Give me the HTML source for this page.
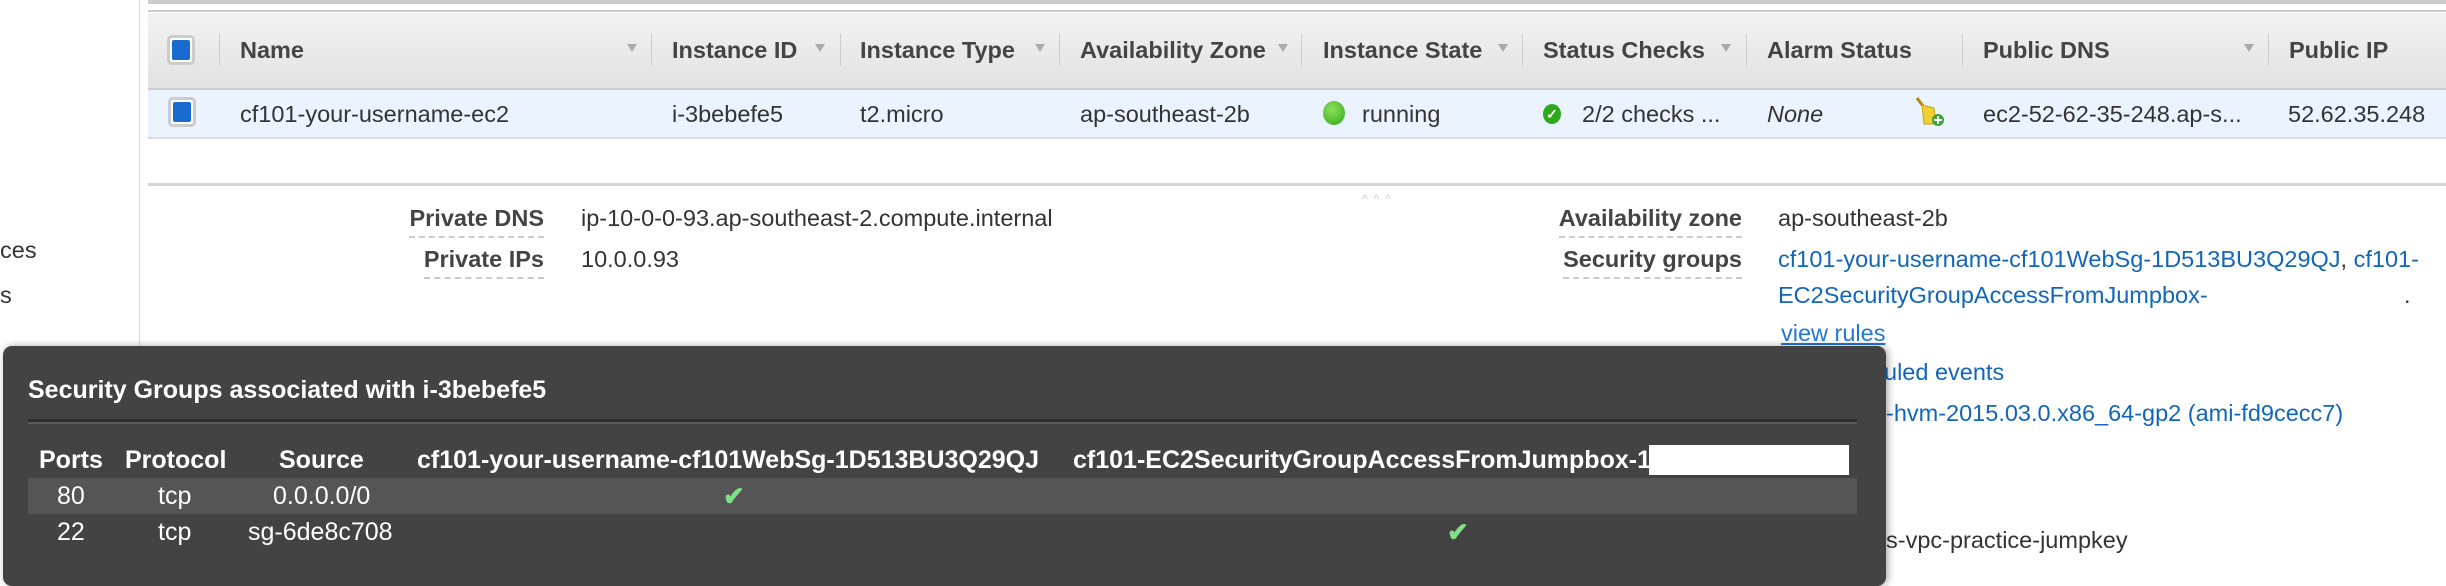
<!DOCTYPE html>
<html><head><meta charset="utf-8"><style>
body{margin:0;width:2446px;height:574px;overflow:hidden;background:#fff;font-family:"Liberation Sans",Arial,sans-serif;position:relative;color:#333}
.a{position:absolute;white-space:nowrap;line-height:26px;font-size:23.5px}
.h{font-weight:bold;color:#444}
.sep{position:absolute;top:34px;width:1px;height:32px;background:#ccc}
.arr{position:absolute;top:44px;width:0;height:0;border-left:5px solid transparent;border-right:5px solid transparent;border-top:8px solid #aaa}
.cb{position:absolute;width:22px;height:24px;border:3px solid #ccc;border-radius:5px;background:#fff}
.cb i{position:absolute;left:2px;top:2px;right:2px;bottom:2px;background:#1a6bd0;border-radius:2px}
.lnk{color:#1166bb}
.lbl{font-weight:bold;color:#444;border-bottom:2px dashed #ccc;padding-bottom:5px}
.w{color:#fff;font-weight:bold;font-size:25px}
.wn{color:#fff;font-size:25px}
.ck{color:#7fe08a;font-size:26px;font-weight:bold}
</style></head><body>
<div style="position:absolute;left:139px;top:0;width:1px;height:574px;background:#ddd"></div>
<div style="position:absolute;left:148px;top:0;width:2300px;height:4px;background:#ccc"></div>
<div style="position:absolute;left:148px;top:10px;width:2300px;height:2px;background:#ccc"></div>
<div style="position:absolute;left:148px;top:13px;width:2300px;height:75px;background:linear-gradient(#f2f2f2,#e2e2e2)"></div>
<div style="position:absolute;left:148px;top:88px;width:2300px;height:2px;background:#ccc"></div>
<div style="position:absolute;left:148px;top:90px;width:2300px;height:48px;background:#eaf3fe"></div>
<div style="position:absolute;left:148px;top:137px;width:2300px;height:2px;background:#ddd"></div>
<div style="position:absolute;left:148px;top:183px;width:2300px;height:3px;background:#d4d4d4"></div>

<div class="cb" style="left:167px;top:35px"><i></i></div>
<div class="sep" style="left:219px"></div>
<div class="a h" style="left:240px;top:37px">Name</div><div class="arr" style="left:627px"></div>
<div class="sep" style="left:651px"></div>
<div class="a h" style="left:672px;top:37px">Instance ID</div><div class="arr" style="left:815px"></div>
<div class="sep" style="left:840px"></div>
<div class="a h" style="left:860px;top:37px">Instance Type</div><div class="arr" style="left:1035px"></div>
<div class="sep" style="left:1059px"></div>
<div class="a h" style="left:1080px;top:37px">Availability Zone</div><div class="arr" style="left:1278px"></div>
<div class="sep" style="left:1301px"></div>
<div class="a h" style="left:1323px;top:37px">Instance State</div><div class="arr" style="left:1498px"></div>
<div class="sep" style="left:1522px"></div>
<div class="a h" style="left:1543px;top:37px">Status Checks</div><div class="arr" style="left:1721px"></div>
<div class="sep" style="left:1746px"></div>
<div class="a h" style="left:1767px;top:37px">Alarm Status</div>
<div class="sep" style="left:1962px"></div>
<div class="a h" style="left:1983px;top:37px">Public DNS</div><div class="arr" style="left:2244px"></div>
<div class="sep" style="left:2268px"></div>
<div class="a h" style="left:2289px;top:37px">Public IP</div>

<div class="cb" style="left:168px;top:97px"><i></i></div>
<div class="a" style="left:240px;top:101px">cf101-your-username-ec2</div>
<div class="a" style="left:672px;top:101px">i-3bebefe5</div>
<div class="a" style="left:860px;top:101px">t2.micro</div>
<div class="a" style="left:1080px;top:101px">ap-southeast-2b</div>
<div style="position:absolute;left:1323px;top:101px;width:22px;height:24px;border-radius:50%;background:radial-gradient(circle at 40% 35%,#8de05a,#2ea81c)"></div>
<div class="a" style="left:1362px;top:101px">running</div>
<div style="position:absolute;left:1543px;top:104px;width:18px;height:20px;border-radius:50%;background:#2ea81c;color:#fff;font-size:14px;line-height:20px;text-align:center;font-weight:bold">✓</div>
<div class="a" style="left:1582px;top:101px">2/2 checks ...</div>
<div class="a" style="left:1767px;top:101px;font-style:italic">None</div>
<svg style="position:absolute;left:1914px;top:96px" width="32" height="32"><path d="M3 2 L9 10" stroke="#b8860b" stroke-width="3"/><path d="M8 9 L20 12 L22 28 L10 28 Z" fill="#f0d030" stroke="#c9a010"/><circle cx="24" cy="24" r="6" fill="#3aa53a"/><path d="M24 20v8M20 24h8" stroke="#fff" stroke-width="2"/></svg>
<div class="a" style="left:1983px;top:101px">ec2-52-62-35-248.ap-s...</div>
<div class="a" style="left:2288px;top:101px">52.62.35.248</div>

<div class="a" style="left:1362px;top:186px;font-size:12px;color:#ccc;letter-spacing:6px">^^^</div>
<div class="a lbl" style="right:1902px;top:205px">Private DNS</div>
<div class="a" style="left:581px;top:205px">ip-10-0-0-93.ap-southeast-2.compute.internal</div>
<div class="a lbl" style="right:1902px;top:246px">Private IPs</div>
<div class="a" style="left:581px;top:246px">10.0.0.93</div>
<div class="a lbl" style="right:704px;top:205px">Availability zone</div>
<div class="a" style="left:1778px;top:205px">ap-southeast-2b</div>
<div class="a lbl" style="right:704px;top:246px">Security groups</div>
<div class="a lnk" style="left:1778px;top:246px">cf101-your-username-cf101WebSg-1D513BU3Q29QJ<span style="color:#333">, </span>cf101-</div>
<div class="a lnk" style="left:1778px;top:282px">EC2SecurityGroupAccessFromJumpbox-</div>
<div class="a" style="left:2404px;top:282px">.</div>
<div class="a lnk" style="left:1781px;top:320px;text-decoration:underline;color:#2277dd">view rules</div>
<div class="a lnk" style="left:1884px;top:359px">uled events</div>
<div class="a lnk" style="left:1886px;top:400px">-hvm-2015.03.0.x86_64-gp2 (ami-fd9cecc7)</div>
<div class="a" style="left:1886px;top:527px">s-vpc-practice-jumpkey</div>
<div class="a" style="left:0;top:237px">ces</div>
<div class="a" style="left:0;top:282px">s</div>

<div style="position:absolute;left:3px;top:346px;width:1883px;height:240px;background:#434343;border-radius:9px;box-shadow:2px 0 8px rgba(0,0,0,.35)"></div>
<div class="a w" style="left:28px;top:377px">Security Groups associated with i-3bebefe5</div>
<div style="position:absolute;left:28px;top:419px;width:1829px;height:3px;background:#2e2e2e"></div>
<div style="position:absolute;left:28px;top:422px;width:1829px;height:2px;background:#5a5a5a"></div>
<div class="a w" style="left:39px;top:447px">Ports</div>
<div class="a w" style="left:125px;top:447px">Protocol</div>
<div class="a w" style="left:279px;top:447px">Source</div>
<div class="a w" style="left:417px;top:447px">cf101-your-username-cf101WebSg-1D513BU3Q29QJ</div>
<div class="a w" style="left:1073px;top:447px">cf101-EC2SecurityGroupAccessFromJumpbox-1</div>
<div style="position:absolute;left:1649px;top:445px;width:200px;height:30px;background:#fff"></div>
<div style="position:absolute;left:28px;top:478px;width:1829px;height:36px;background:#555"></div>
<div class="a wn" style="left:57px;top:483px">80</div>
<div class="a wn" style="left:158px;top:483px">tcp</div>
<div class="a wn" style="left:273px;top:483px">0.0.0.0/0</div>
<div class="a ck" style="left:723px;top:483px">✔</div>
<div class="a wn" style="left:57px;top:519px">22</div>
<div class="a wn" style="left:158px;top:519px">tcp</div>
<div class="a wn" style="left:248px;top:519px">sg-6de8c708</div>
<div class="a ck" style="left:1447px;top:519px">✔</div>
</body></html>
